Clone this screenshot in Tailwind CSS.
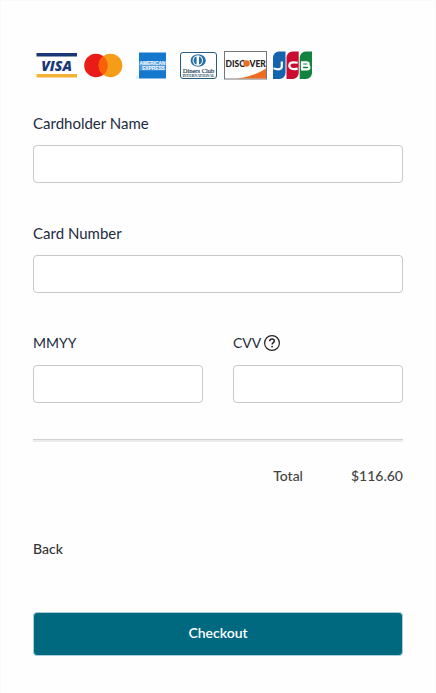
<!DOCTYPE html>
<html lang="en">
<head>
    <meta charset="UTF-8">
    <meta name="viewport" content="width=device-width, initial-scale=1.0">
    <title>Checkout</title>
    <script src="https://cdn.jsdelivr.net/npm/@tailwindcss/browser@4"></script>
</head>
<body class="bg-[#fafafa] font-['Lato',sans-serif] text-[15px] leading-6 text-[#1d2b3e]">
    <main class="min-h-screen mx-px border-t border-[#fafafa] bg-[#fefefe] px-8 pt-12 pb-9">
        <!-- Accepted cards -->
        <div class="flex h-8 mb-[30px]">
            <svg class="shrink-0" width="47" height="32" viewBox="0 0 47 32" role="img" aria-label="Visa">
                <rect x="3.5" y="4" width="40.5" height="3.5" fill="#1a3875" />
                <text x="23.5" y="21.5" text-anchor="middle" font-family="Open Sans, sans-serif" font-size="14" font-weight="800" font-style="italic" fill="#1a3875">VISA</text>
                <rect x="3.5" y="25" width="40.5" height="3.5" fill="#f5b335" />
            </svg>
            <svg class="shrink-0" width="50" height="32" viewBox="0 0 50 32" role="img" aria-label="Mastercard">
                <circle cx="16" cy="16.5" r="11.8" fill="#e91c18" />
                <circle cx="30.5" cy="16.5" r="11.8" fill="#f59d18" />
                <path d="M23.2 7.2a11.8 11.8 0 0 1 0 18.6a11.8 11.8 0 0 1 0-18.6z" fill="#fb5f08" />
            </svg>
            <svg class="shrink-0" width="45" height="32" viewBox="0 0 45 32" role="img" aria-label="American Express">
                <rect x="9" y="3.5" width="27" height="26" fill="#1479cd" />
                <rect x="9.5" y="12.3" width="26" height="9.2" fill="#cfe4f5" opacity=".35" />
                <text x="22.5" y="16.4" text-anchor="middle" font-family="Liberation Sans, sans-serif" font-size="4.8" font-weight="700" fill="#fff">AMERICAN</text>
                <text x="23.5" y="21.2" text-anchor="middle" font-family="Liberation Sans, sans-serif" font-size="4.8" font-weight="700" fill="#fff">EXPRESS</text>
                <circle cx="7" cy="28.5" r="1" fill="none" stroke="#a9cbe6" stroke-width=".5" />
            </svg>
            <svg class="shrink-0" width="45" height="32" viewBox="0 0 45 32" role="img" aria-label="Diners Club International">
                <rect x="5.5" y="3.5" width="36" height="26" rx="2.5" fill="#fff" stroke="#265b82" />
                <ellipse cx="23.2" cy="11.5" rx="7.6" ry="6.2" fill="#2670a8" />
                <circle cx="22.8" cy="11.5" r="5.2" fill="#fff" />
                <path d="M21.6 7.4v8.2a4.3 4.3 0 0 1 0-8.2zM24 7.4a4.3 4.3 0 0 1 0 8.2z" fill="#2670a8" />
                <text x="23.5" y="23.5" text-anchor="middle" font-family="Liberation Serif, serif" font-size="6.5" fill="#29475c" stroke="#29475c" stroke-width=".2">Diners Club</text>
                <text x="23.5" y="28" text-anchor="middle" font-family="Liberation Serif, serif" font-size="3.8" font-weight="700" fill="#29475c">INTERNATIONAL</text>
            </svg>
            <svg class="shrink-0" width="50" height="32" viewBox="0 0 50 32" role="img" aria-label="Discover">
                <rect x="4.5" y="2.5" width="42" height="27.5" fill="#fff" stroke="#777" />
                <path d="M46 19.5v10H16.5C29 28 38 24.5 46 19.5z" fill="#ee6c22" />
                <g font-family="Lato, sans-serif" font-size="8.5" font-weight="900" fill="#222">
                    <text x="5.5" y="17.5">DISC</text>
                    <text x="29.5" y="17.5">VER</text>
                </g>
                <circle cx="26.5" cy="14.5" r="3.2" fill="#ee6c22" />
            </svg>
            <svg class="shrink-0" width="45" height="32" viewBox="0 0 45 32" role="img" aria-label="JCB">
                <path d="M9 2.5H15.500V24a6 6 0 0 1-6 6H3V8.500a6 6 0 0 1 6-6z" fill="#1464ad" />
                <path d="M22.500 2.500h6.200V24a6 6 0 0 1-6 6h-6.200V8.500a6 6 0 0 1 6-6z" fill="#c90c30" />
                <path d="M36 2.500h6V24a6 6 0 0 1-6 6h-6.300V8.500a6 6 0 0 1 6.300-6z" fill="#128440" />
                <g fill="none" stroke="#fff" stroke-width="2.200">
                    <path d="M11.800 12.500v4.800c0 2.300-1.300 3-3.400 3-1.800 0-3.400-.3-4.900-1" />
                    <path d="M27.700 13.800c-5-1.200-8.400-.3-8.400 2.800s3.400 4.200 8.400 3" />
                    <path d="M31 13.400h5.500c2.800 0 2.800 3.200 0 3.200H32m5 0c3.200 0 3.200 3.700 0 3.700H31M32 13v7" />
                </g>
            </svg>
        </div>

        <form>
            <div class="mb-[38px]">
                <label for="cardName" class="block mb-[10px]">Cardholder Name</label>
                <input id="cardName" type="text" class="block w-full h-[38px] rounded border border-[#c8c8c8] bg-white px-3">
            </div>

            <div class="mb-[38px]">
                <label for="cardNumber" class="block mb-[10px]">Card Number</label>
                <input id="cardNumber" type="text" inputmode="numeric" class="block w-full h-[38px] rounded border border-[#c8c8c8] bg-white px-3">
            </div>

            <div class="grid grid-cols-2 gap-[30px]">
                <div>
                    <label for="expiry" class="block mb-[10px] text-sm/6">MMYY</label>
                    <input id="expiry" type="text" inputmode="numeric" class="block w-full h-[38px] rounded border border-[#c8c8c8] bg-white px-3">
                </div>
                <div>
                    <div class="flex items-center gap-0.5 mb-[10px]">
                        <label for="cvv" class="text-sm/6">CVV</label>
                        <button type="button" aria-label="What is CVV?" class="text-[#222]">
                            <svg width="18" height="18" viewBox="0 0 18 18" fill="none" stroke="currentColor">
                                <circle cx="9" cy="9" r="7.4" stroke-width="1.2" />
                                <path d="M6.7 7.2c0-1.4 1-2.2 2.3-2.2s2.300.8 2.300 2c0 1.700-2.200 1.700-2.200 3.500" stroke-width="1.5" />
                                <circle cx="9.1" cy="12.6" r=".9" fill="currentColor" stroke="none" />
                            </svg>
                        </button>
                    </div>
                    <input id="cvv" type="text" inputmode="numeric" class="block w-full h-[38px] rounded border border-[#c8c8c8] bg-white px-3">
                </div>
            </div>

            <hr class="mt-9 h-[3px] border-t border-[#d2d2d2] bg-[#ececec]">

            <!-- Total -->
            <div class="flex justify-end gap-12 mt-[22px] text-sm/6 font-medium text-[#444]">
                <span>Total</span>
                <span>$116.60</span>
            </div>

            <a href="#" class="inline-block mt-[49px] text-sm/6 font-medium text-[#333]">Back</a>

            <button type="submit" class="block w-full h-11 mt-[51px] rounded border border-[#a9ced8] bg-[#006980] pb-0.5 text-sm/6 font-semibold text-white">Checkout</button>
        </form>
    </main>
</body>
</html>
